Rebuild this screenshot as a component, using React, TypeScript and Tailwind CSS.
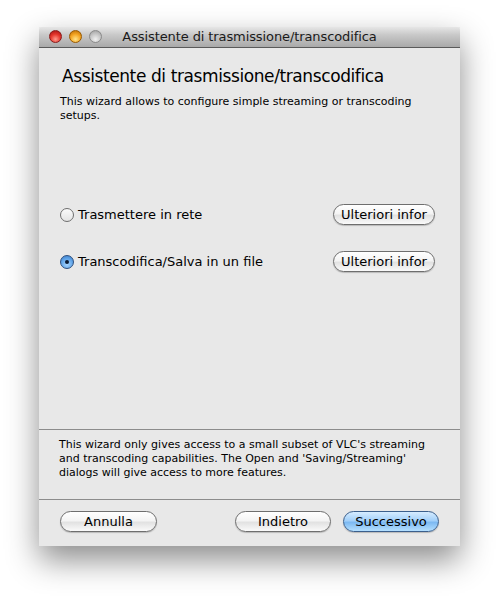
import React from "react";

const font = { fontFamily: '"DejaVu Sans", "Lucida Grande", Verdana, sans-serif' };

function AquaButton({ label, primary = false, w }: { label: string; primary?: boolean; w: string }) {
  return (
    <div
      className={`${w} h-[21px] rounded-full border flex items-center justify-center text-[13px] text-black ${
        primary
          ? "border-[#3b5f8c] bg-[linear-gradient(to_bottom,#d6ecff_0%,#a3d0f9_45%,#7db9f2_55%,#b5e0ff_100%)]"
          : "border-[#6e6e6e] bg-[linear-gradient(to_bottom,#ffffff_0%,#f4f4f4_45%,#e2e2e2_55%,#fafafa_100%)]"
      } shadow-[0_1px_1px_rgba(0,0,0,0.2)]`}
    >
      {label}
    </div>
  );
}

function Radio({ checked }: { checked?: boolean }) {
  return (
    <div
      className={`w-[14px] h-[14px] rounded-full border flex items-center justify-center ${
        checked
          ? "border-[#2d4f7f] bg-[radial-gradient(circle_at_50%_70%,#a9d6ff_0%,#5aa0e6_60%,#3d78c0_100%)]"
          : "border-[#6e6e6e] bg-[linear-gradient(to_bottom,#fafafa,#e4e4e4)]"
      }`}
    >
      {checked && <div className="w-[4px] h-[4px] rounded-full bg-[#0b1a33]" />}
    </div>
  );
}

export default function App() {
  return (
    <div className="w-[500px] h-[601px] bg-white pt-[27px] pl-[39px]" style={font}>
      <div className="w-[421px] h-[519px] flex flex-col bg-[#e8e8e8] shadow-[0_14px_30px_rgba(0,0,0,0.45)]">
        {/* Title bar */}
        <div className="h-[21px] shrink-0 relative flex items-center justify-center border-b border-[#5a5a5a] bg-[linear-gradient(to_bottom,#e6e6e6_0%,#c8c8c8_40%,#a9a9a9_100%)] rounded-t-[4px]">
          <div className="absolute left-[10px] top-[3px] flex gap-[7px]">
            <div className="w-[13px] h-[13px] rounded-full border border-[#8a1a1a] bg-[radial-gradient(circle_at_50%_75%,#ff9a8c_0%,#e5362d_50%,#a01010_100%)]" />
            <div className="w-[13px] h-[13px] rounded-full border border-[#9a5a00] bg-[radial-gradient(circle_at_50%_75%,#ffe48a_0%,#f5a623_50%,#b86800_100%)]" />
            <div className="w-[13px] h-[13px] rounded-full border border-[#8a8a8a] bg-[radial-gradient(circle_at_50%_75%,#f0f0f0_0%,#c4c4c4_55%,#9a9a9a_100%)]" />
          </div>
          <span className="text-[13px] tracking-[-0.1px] text-[#1a1a1a]">Assistente di trasmissione/transcodifica</span>
        </div>

        {/* Main body */}
        <div className="h-[381px] shrink-0 flex flex-col px-[21px]">
          <div className="mt-[17px] text-[17px] tracking-[-0.4px] leading-[22px] text-black pl-[2px]">
            Assistente di trasmissione/transcodifica
          </div>
          <div className="mt-[8px] text-[11px] leading-[14px] text-black">
            This wizard allows to configure simple streaming or transcoding setups.
          </div>

          <div className="mt-[81px] flex items-center justify-between pr-[4px]">
            <div className="flex items-center gap-[4px]">
              <Radio />
              <span className="text-[13px] text-black">Trasmettere in rete</span>
            </div>
            <AquaButton label="Ulteriori infor" w="w-[102px]" />
          </div>
          <div className="mt-[26px] flex items-center justify-between pr-[4px]">
            <div className="flex items-center gap-[4px]">
              <Radio checked />
              <span className="text-[13px] text-black">Transcodifica/Salva in un file</span>
            </div>
            <AquaButton label="Ulteriori infor" w="w-[102px]" />
          </div>
        </div>

        <div className="h-px shrink-0 bg-[#8c8c8c]" />

        {/* Info text */}
        <div className="h-[69px] shrink-0 px-[20px] pt-[8px] text-[11px] leading-[14px] text-black">
          This wizard only gives access to a small subset of VLC's streaming and transcoding capabilities. The Open and
          'Saving/Streaming' dialogs will give access to more features.
        </div>

        <div className="h-px shrink-0 bg-[#8c8c8c]" />

        {/* Buttons */}
        <div className="flex-1 flex items-start pt-[11px] px-[21px]">
          <AquaButton label="Annulla" w="w-[97px]" />
          <div className="flex-1" />
          <AquaButton label="Indietro" w="w-[96px]" />
          <div className="w-[12px]" />
          <AquaButton label="Successivo" primary w="w-[96px]" />
        </div>
      </div>
    </div>
  );
}
